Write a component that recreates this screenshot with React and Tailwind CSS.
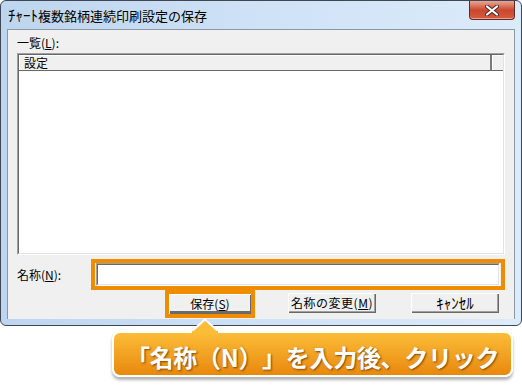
import React from "react";

// Boutons classiques au relief "Windows"
const WinButton = ({ children, className = "" }) => (
  <div
    className={`flex h-[20px] items-center justify-center bg-[#f0f0f0] text-[12px] text-black shadow-[inset_1px_1px_#ffffff,inset_-1px_-1px_#696969,inset_-2px_-2px_#a0a0a0] ${className}`}
  >
    {children}
  </div>
);

const CloseIcon = () => (
  <svg width="14" height="11" viewBox="0 0 14 11">
    <path d="M2 1.5 L12 9.5 M12 1.5 L2 9.5" stroke="#4a2a24" strokeWidth="4" strokeLinecap="round" />
    <path d="M2 1.5 L12 9.5 M12 1.5 L2 9.5" stroke="#ffffff" strokeWidth="2.2" strokeLinecap="round" />
  </svg>
);

const App = () => {
  return (
    <div
      className="h-[385px] w-[522px] overflow-hidden bg-white"
      style={{ fontFamily: '"Noto Sans CJK JP", "Noto Sans", sans-serif' }}
    >
      {/* Fenêtre de dialogue */}
      <div className="flex h-[326px] w-[522px] flex-col rounded-[6px] border border-[#3f4852] bg-gradient-to-r from-[#bdd5ee] via-[#cfe2f6] to-[#dcebfa]">
        {/* Barre de titre */}
        <div className="flex h-[28px] items-start justify-between">
          <div className="pl-[7px] pt-[5px] text-[13px] leading-[17px] text-black">
            <span className="text-[15px]">ﾁｬｰﾄ</span>複数銘柄連続印刷設定の保存
          </div>
          <div className="mr-[6px] flex h-[19px] w-[46px] items-center justify-center rounded-b-[4px] border border-t-0 border-[#5e2a22] bg-gradient-to-b from-[#e9a595] via-[#c9472d] to-[#d85a3f] shadow-[inset_0_-1px_#f0a090]">
            <CloseIcon />
          </div>
        </div>

        {/* Zone cliente */}
        <div className="mx-[6px] flex h-[290px] flex-col border border-b-0 border-[#8a97a5] bg-[#f0f0f0] px-[9px]">
          <div className="pt-[6px] text-[12px] leading-[14px] text-black">
            一覧(<u>L</u>):
          </div>

          {/* Liste */}
          <div className="mt-[3px] h-[202px] border border-t-[#a0a0a0] border-l-[#a0a0a0] border-r-[#ffffff] border-b-[#ffffff]">
            <div className="flex h-full flex-col border border-t-[#696969] border-l-[#696969] border-r-[#e3e3e3] border-b-[#e3e3e3] bg-white">
              <div className="flex h-[16px] border-b border-[#696969] bg-[#f0f0f0]">
                <div className="flex w-[473px] items-center border-r-2 border-r-[#7a7a7a] pl-[5px] text-[12px] leading-[14px] text-black shadow-[inset_1px_1px_#ffffff]">
                  設定
                </div>
                <div className="flex-1 shadow-[inset_1px_1px_#ffffff]" />
              </div>
            </div>
          </div>

          {/* Nom */}
          <div className="mt-[4px] flex h-[31px] items-center">
            <div className="w-[74px] text-[12px] leading-[14px] text-black">
              名称(<u>N</u>):
            </div>
            <div className="h-[31px] w-[417px] border-4 border-[#ef8c00] px-[1px]">
              <div className="h-full border border-t-[#a0a0a0] border-l-[#a0a0a0] border-r-[#ffffff] border-b-[#ffffff]">
                <div className="h-full border border-t-[#696969] border-l-[#696969] border-r-[#e3e3e3] border-b-[#e3e3e3] bg-white" />
              </div>
            </div>
          </div>

          {/* Boutons */}
          <div className="flex items-start">
            <div className="ml-[148px] h-[28px] w-[90px] border-4 border-[#ef8c00]">
              <WinButton className="shadow-[inset_1px_1px_#ffffff,inset_0_-3px_#6a6a6a,inset_-1px_0_#696969]">
                保存(<u>S</u>)
              </WinButton>
            </div>
            <WinButton className="ml-[33px] mt-[3px] w-[88px] tracking-[0.5px]">
              名称の変更(<u>M</u>)
            </WinButton>
            <WinButton className="ml-[35px] mt-[3px] w-[88px] text-[15px]">ｷｬﾝｾﾙ</WinButton>
          </div>
        </div>
      </div>

      {/* Bulle d'explication */}
      <div className="relative ml-[112px] mt-[5px] h-[46px] w-[401px]">
        <svg className="absolute left-[78px] top-[-13px] z-10" width="30" height="16" viewBox="0 0 30 16">
          <path d="M1 14 L15 1.5 L29 14" fill="#fbbd38" stroke="#ffffff" strokeWidth="2" strokeLinejoin="round" />
          <rect x="2" y="13" width="26" height="3" fill="#fbbd38" />
        </svg>
        <div className="flex h-full w-full items-center justify-center rounded-[8px] border-2 border-white bg-gradient-to-b from-[#fbbd36] to-[#e8880a] pt-[6px] shadow-[0_3px_3px_rgba(0,0,0,0.3)]">
          <span
            className="text-[24px] font-bold leading-[30px] tracking-[-0.3px] text-white [text-spacing-trim:space-all]"
            style={{ textShadow: "1px 1px 2px rgba(110,55,0,0.85)" }}
          >
            「名称（N）」を入力後、クリック
          </span>
        </div>
      </div>
    </div>
  );
};

export default App;
